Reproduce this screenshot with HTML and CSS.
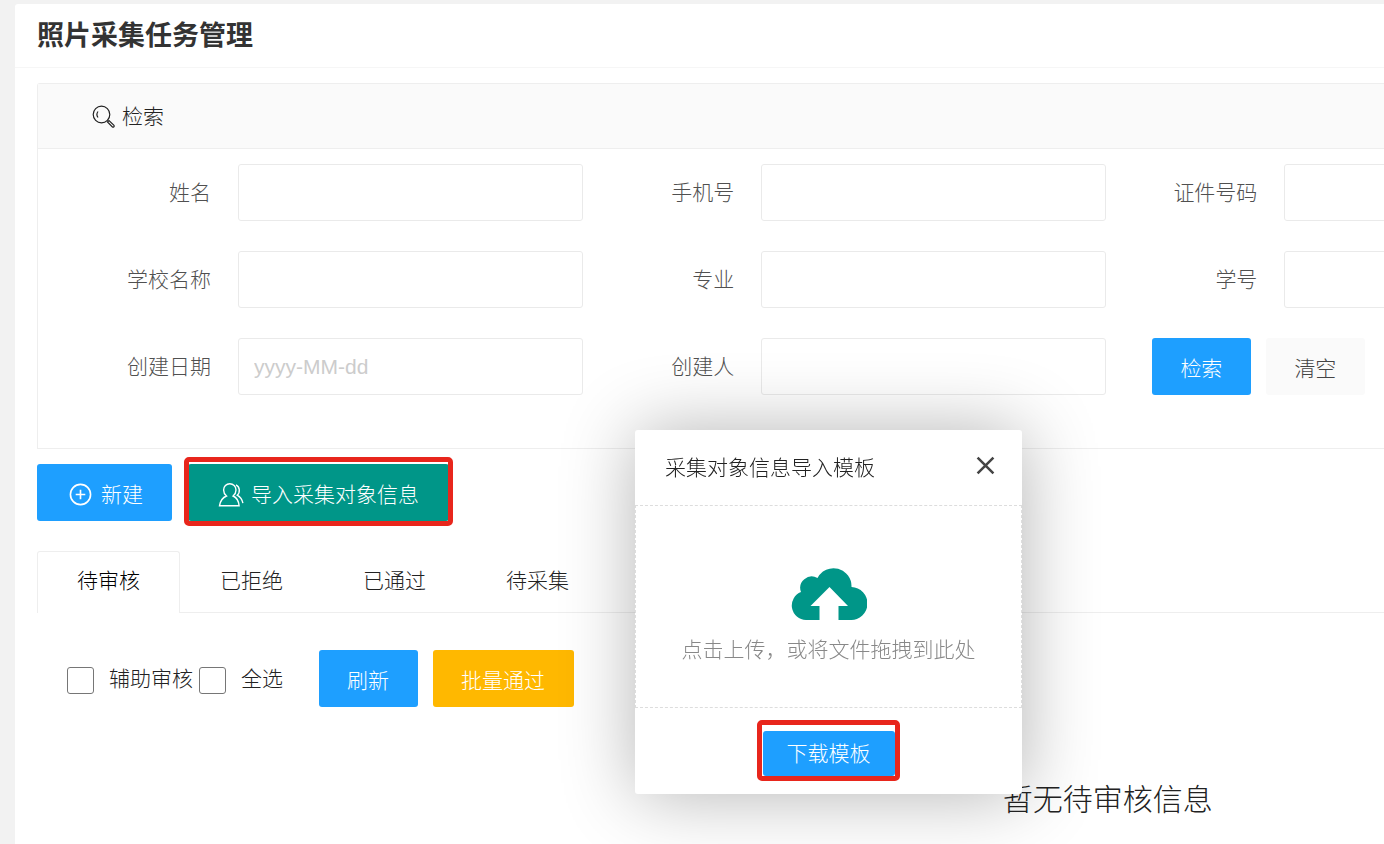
FILE: index.html
```html
<!DOCTYPE html>
<html lang="zh-CN">
<head>
<meta charset="utf-8">
<title>照片采集任务管理</title>
<link rel="stylesheet" href="styles.css">
</head>
<body>
<main class="card">
  <header class="card-header"><h1 class="title">照片采集任务管理</h1></header>
  <div class="card-body">
    <section class="panel">
      <h2 class="panel-title">
        <svg class="icon-search" viewBox="0 0 24 24" aria-hidden="true"><circle cx="9.500" cy="9.500" r="8.300"/><path d="M6 12.500a5 5 0 0 1 0-6M15.500 17l1.500-1.500 5 4.800a1.200 1.200 0 0 1-1.600 1.700z"/></svg>
        检索
      </h2>
      <form class="search-form">
        <div class="field"><label class="label" for="name">姓名</label><input class="input" id="name" type="text"></div>
        <div class="field"><label class="label" for="phone">手机号</label><input class="input" id="phone" type="text"></div>
        <div class="field"><label class="label" for="idno">证件号码</label><input class="input" id="idno" type="text"></div>
        <div class="field"><label class="label" for="school">学校名称</label><input class="input" id="school" type="text"></div>
        <div class="field"><label class="label" for="major">专业</label><input class="input" id="major" type="text"></div>
        <div class="field"><label class="label" for="sno">学号</label><input class="input" id="sno" type="text"></div>
        <div class="field"><label class="label" for="date">创建日期</label><input class="input" id="date" type="text" placeholder="yyyy-MM-dd"></div>
        <div class="field"><label class="label" for="creator">创建人</label><input class="input" id="creator" type="text"></div>
        <div class="form-actions">
          <button class="btn btn-blue" type="button">检索</button>
          <button class="btn btn-plain" type="button">清空</button>
        </div>
      </form>
    </section>

    <div class="toolbar">
      <button class="btn btn-blue btn-new" type="button">
        <svg class="icon-plus" viewBox="0 0 24 24" aria-hidden="true"><circle cx="12" cy="12" r="10.5"/><path d="M12 7v10M7 12h10"/></svg>
        新建
      </button>
      <div class="marked">
        <button class="btn btn-green" type="button">
          <svg class="icon-user" viewBox="0 0 26 26" aria-hidden="true"><path d="M8.500 14C6.500 12.300 5.600 10.200 5.600 8a6.200 6.200 0 0 1 12.400 0c0 2.200-.9 4.300-2.900 6 3.600 1.600 5.600 4.900 6 9.800H1.500c.8-4.900 3-8.200 7-9.800z"/><path d="M18 2.800c3.800 1.800 4.500 7.700 1.200 10.400 3.200 1.800 5 4.400 5.700 8"/></svg>
          导入采集对象信息
        </button>
        <span class="mark mark-import"></span>
      </div>
    </div>

    <nav class="tabs">
      <button class="tab tab-active" type="button">待审核</button>
      <button class="tab" type="button">已拒绝</button>
      <button class="tab" type="button">已通过</button>
      <button class="tab" type="button">待采集</button>
    </nav>

    <div class="batch">
      <label class="check"><input class="box" type="checkbox">辅助审核</label>
      <label class="check"><input class="box" type="checkbox">全选</label>
      <div class="batch-actions">
        <button class="btn btn-blue" type="button">刷新</button>
        <button class="btn btn-orange" type="button">批量通过</button>
      </div>
    </div>
    <p class="empty">暂无待审核信息</p>
  </div>
</main>

<div class="dialog" role="dialog" aria-labelledby="dialog-title">
  <header class="dialog-header">
    <h2 class="dialog-title" id="dialog-title">采集对象信息导入模板</h2>
    <button class="close" type="button" aria-label="关闭"><svg class="icon-close" viewBox="0 0 18 18" aria-hidden="true"><path d="M1.500 1.500l15 15M16.500 1.500l-15 15"/></svg></button>
  </header>
  <div class="upload">
    <svg class="icon-cloud" viewBox="0 0 76 52" aria-hidden="true"><path d="M15 52A14.500 14.500 0 0 1 10 24A11.500 11.500 0 0 1 26.500 10A18 18 0 0 1 60.500 19A16.500 16.500 0 0 1 59.500 52H47.500V38H57L38.500 19 19.500 38H28.500V52z"/></svg>
    <p class="upload-text">点击上传，或将文件拖拽到此处</p>
  </div>
  <footer class="dialog-footer">
    <div class="marked">
      <button class="btn btn-blue btn-download" type="button">下载模板</button>
      <span class="mark mark-download"></span>
    </div>
  </footer>
</div>
</body>
</html>
```
FILE: styles.css
```css
* { box-sizing: border-box; }

body {
  margin: 0;
  padding: 4px 0 0 15px;
  min-height: 100vh;
  display: flex;
  background: #f2f2f2;
  color: #222;
  font: 300 21px/32px "Liberation Sans", "Noto Sans CJK SC", sans-serif;
  overflow: hidden;
}

h1, h2, p { margin: 0; font-weight: inherit; }
button, input { font: inherit; color: inherit; }
button { border: 0; cursor: pointer; }
svg { flex: none; fill: none; stroke: currentColor; }

.card {
  flex: 1;
  min-width: 0;
  overflow: hidden;
  background: #fff;
  border-top-left-radius: 3px;
}
.card-header {
  padding: 12px 22px 11px;
  border-bottom: 1px solid #f6f6f6;
}
.title { color: #333; font-size: 27px; font-weight: 700; line-height: 40px; }
.card-body { padding: 15px 0 0 22px; }

.panel {
  border: 1px solid #eee;
  border-right: 0;
  border-top-left-radius: 3px;
}
.panel-title {
  display: flex;
  align-items: center;
  gap: 6px;
  padding: 17px 54px 15px;
  font-size: 21px;
  background: #fafafa;
  border-bottom: 1px solid #eee;
}
.search-form {
  display: grid;
  grid-template-columns: repeat(3, 40%);
  row-gap: 30px;
  padding: 15px 16px 53px 22px;
}
.field { display: flex; align-items: center; }
.label {
  flex: none;
  width: 178px;
  padding-right: 27px;
  text-align: right;
  color: #505050;
}
.input {
  flex: 1;
  min-width: 0;
  height: 57px;
  padding: 0 15px;
  background: #fff;
  border: 1px solid #eaeaea;
  border-radius: 3px;
}
.input::placeholder { color: #ccc; opacity: 1; }
.form-actions { display: flex; gap: 15px; padding-left: 46px; }

.btn {
  display: flex;
  align-items: center;
  justify-content: center;
  flex: none;
  height: 57px;
  padding: 4px 29px 0 28px;
  color: #fff;
  border-radius: 3px;
  white-space: nowrap;
}
.btn-blue { background: #1e9fff; }
.btn-green { gap: 7px; padding: 4px 30px 0; background: #009688; }
.btn-orange { background: #ffb800; }
.btn-plain { color: #444; background: #fafafa; }
.btn-new { gap: 9px; padding: 4px 29px 0 32px; }

.toolbar { display: flex; gap: 16px; margin-top: 15px; }
.marked { position: relative; }
.mark {
  position: absolute;
  border: 5px solid #e8261c;
  border-radius: 5px;
  pointer-events: none;
}
.mark-import { inset: -7px -4px -5px -4px; }
.mark-download { inset: -11px -5px -5px -6px; }

.tabs {
  display: flex;
  margin-top: 30px;
  height: 62px;
  border-bottom: 1px solid #eee;
}
.tab {
  height: 60px;
  padding: 0 39px 1px;
  background: none;
  border: 1px solid transparent;
  border-bottom: 0;
}
.tab-active {
  height: 62px;
  padding-bottom: 3px;
  color: #000;
  background: #fff;
  border-color: #eee;
  border-radius: 3px 3px 0 0;
}

.batch {
  display: flex;
  align-items: center;
  gap: 6px;
  padding: 37px 0 0 30px;
}
.check { display: flex; align-items: center; gap: 15px; }
.box {
  appearance: none;
  width: 27px;
  height: 27px;
  margin: 3px 0 0;
  background: #fff;
  border: 1px solid #767676;
  border-radius: 3px;
}
.batch-actions { display: flex; gap: 15px; margin-left: 30px; }
.empty {
  width: 159%;
  margin-top: 70px;
  font-size: 30px;
  line-height: 45px;
  text-align: center;
}

.dialog {
  position: fixed;
  top: 430px;
  left: 635px;
  width: 387px;
  background: #fff;
  border-radius: 3px;
  box-shadow: 1px 1px 75px rgba(0, 0, 0, .3);
}
.dialog-header {
  display: flex;
  align-items: center;
  justify-content: space-between;
  height: 75px;
  padding: 0 27px 0 30px;
}
.dialog-title { font-size: 21px; }
.close { display: flex; padding: 0; margin-bottom: 4px; color: #444; background: none; }
.upload {
  display: flex;
  flex-direction: column;
  align-items: center;
  gap: 14px;
  padding: 62px 0 41px;
  border: 1px dashed #ddd;
  color: #888;
}
.dialog-footer { display: flex; justify-content: center; padding: 23px 0 18px; }
.btn-download { height: 45px; padding: 0 24px; }

.icon-search { width: 24px; height: 24px; stroke-width: 1.2; }
.icon-plus { width: 23px; height: 23px; stroke-width: 1.7; }
.icon-user { width: 26px; height: 26px; stroke-width: 1.4; }
.icon-close { width: 19px; height: 19px; stroke-width: 2.4; }
.icon-cloud { width: 76px; height: 52px; fill: #009688; stroke: none; }
```
